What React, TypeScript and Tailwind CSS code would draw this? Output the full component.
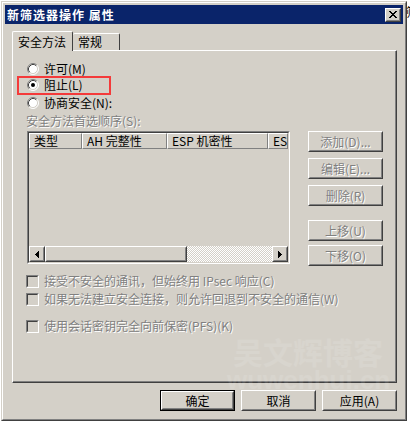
import React from "react";

const DIS = "text-[#808080] [text-shadow:1px_1px_0_#ffffff]";

function Raised({ className = "", children, innerClass = "" }: { className?: string; children?: React.ReactNode; innerClass?: string }) {
  return (
    <div className={"border border-t-white border-l-white border-r-[#404040] border-b-[#404040] bg-[#d4d0c8] " + className}>
      <div className={"h-full w-full border border-t-transparent border-l-transparent border-r-[#808080] border-b-[#808080] flex items-center " + innerClass}>
        {children}
      </div>
    </div>
  );
}

function Btn({ children, disabled, className = "" }: { children: React.ReactNode; disabled?: boolean; className?: string }) {
  return (
    <Raised className={"h-[21px] w-[75px] " + className} innerClass="justify-center">
      <span className={"text-[12px] leading-[14px] " + (disabled ? DIS : "text-black")}>{children}</span>
    </Raised>
  );
}

function Radio({ checked }: { checked?: boolean }) {
  return (
    <svg width="12" height="12" viewBox="0 0 12 12" className="shrink-0">
      <circle cx="6" cy="6" r="5" fill="#ffffff" />
      <path d="M2.11 9.89 A5.5 5.5 0 0 1 9.89 2.11" stroke="#808080" strokeWidth="1" fill="none" />
      <path d="M9.89 2.11 A5.5 5.5 0 0 1 2.11 9.89" stroke="#ffffff" strokeWidth="1" fill="none" />
      <path d="M2.82 9.18 A4.5 4.5 0 0 1 9.18 2.82" stroke="#404040" strokeWidth="1" fill="none" />
      <path d="M9.18 2.82 A4.5 4.5 0 0 1 2.82 9.18" stroke="#d4d0c8" strokeWidth="1" fill="none" />
      {checked && <circle cx="6" cy="6" r="2" fill="#000000" />}
    </svg>
  );
}

function Check() {
  return (
    <div className="w-[13px] h-[13px] shrink-0 border border-t-[#808080] border-l-[#808080] border-r-white border-b-white">
      <div className="w-full h-full border border-t-[#404040] border-l-[#404040] border-r-[#d4d0c8] border-b-[#d4d0c8] bg-[#d4d0c8]" />
    </div>
  );
}

function HeaderCell({ children, className = "" }: { children: React.ReactNode; className?: string }) {
  return (
    <div className={"h-full shrink-0 border border-t-white border-l-white border-r-[#808080] border-b-[#808080] flex items-center pl-[4px] whitespace-nowrap overflow-hidden " + className}>
      <span className="text-[12px] leading-[14px] text-black">{children}</span>
    </div>
  );
}

function ArrowBtn({ dir }: { dir: "l" | "r" }) {
  return (
    <Raised className="w-[16px] h-[16px] shrink-0" innerClass="justify-center">
      <svg width="4" height="7" viewBox="0 0 4 7" shapeRendering="crispEdges">
        {dir === "l" ? (
          <path d="M3 0h1v7h-1z M2 1h1v5h-1z M1 2h1v3h-1z M0 3h1v1h-1z" fill="#000" />
        ) : (
          <path d="M0 0h1v7h-1z M1 1h1v5h-1z M2 2h1v3h-1z M3 3h1v1h-1z" fill="#000" />
        )}
      </svg>
    </Raised>
  );
}

export default function App() {
  return (
    <div className="relative w-[410px] h-[425px] bg-white overflow-hidden font-['Noto_Sans_CJK_SC',sans-serif] text-[12px] text-black">
      <div className="ml-[1px] mt-[1px] w-[406px] h-[420px] border border-t-[#d4d0c8] border-l-[#d4d0c8] border-r-[#404040] border-b-[#404040] bg-[#d4d0c8]">
        <div className="h-full border border-t-white border-l-white border-r-[#808080] border-b-[#808080] p-[2px] flex flex-col">
          {/* title bar */}
          <div className="h-[19px] shrink-0 bg-[#0a246a] flex items-center justify-between pl-[2px] pr-[2px]">
            <span className="text-white font-bold text-[12px] tracking-[1px] leading-[14px]">新筛选器操作 属性</span>
            <Raised className="w-[16px] h-[14px]" innerClass="justify-center">
              <svg width="8" height="7" viewBox="0 0 8 7" shapeRendering="crispEdges">
                <path
                  d="M0 0h2v1h-2z M6 0h2v1h-2z M1 1h2v1h-2z M5 1h2v1h-2z M2 2h4v1h-4z M3 3h2v1h-2z M2 4h4v1h-4z M1 5h2v1h-2z M5 5h2v1h-2z M0 6h2v1h-2z M6 6h2v1h-2z"
                  fill="#000"
                />
              </svg>
            </Raised>
          </div>

          <div className="pl-[7px] pt-[7px]">
            {/* tabs */}
            <div className="flex items-end h-[19px]">
              <div className="relative z-10 -mb-[1px] w-[61px] h-[20px] bg-[#d4d0c8] border-t border-l border-r border-t-white border-l-white border-r-[#404040] rounded-t-[2px] flex items-center pl-[5px]">
                <span className="text-[12px] leading-[14px]">安全方法</span>
              </div>
              <div className="w-[47px] h-[17px] bg-[#d4d0c8] border-t border-r border-t-white border-r-[#404040] rounded-t-[2px] flex items-center pl-[5px]">
                <span className="text-[12px] leading-[14px]">常规</span>
              </div>
            </div>

            {/* panel */}
            <div className="w-[385px] h-[333px] border border-t-white border-l-white border-r-[#404040] border-b-[#404040]">
              <div className="h-full border-r border-b border-r-[#808080] border-b-[#808080] pl-[13px] flex flex-col">
                <div className="mt-[10px] h-[16px] flex items-center gap-[5px] pl-[1px]">
                  <Radio />
                  <span className="leading-[14px]">许可(M)</span>
                </div>
                <div className="h-[16px] flex items-center gap-[5px] pl-[1px]">
                  <Radio checked />
                  <span className="leading-[14px]">阻止(L)</span>
                </div>
                <div className="mt-[2px] h-[16px] flex items-center gap-[5px] pl-[1px]">
                  <Radio />
                  <span className="leading-[14px]">协商安全(N):</span>
                </div>
                <div className="mt-[2px] h-[16px] flex items-center">
                  <span className={"leading-[14px] " + DIS}>安全方法首选顺序(S):</span>
                </div>

                <div className="mt-[2px] flex h-[135px]">
                  {/* list */}
                  <div className="ml-[1px] w-[263px] h-[133px] shrink-0 border border-t-[#808080] border-l-[#808080] border-r-white border-b-white">
                    <div className="h-full border border-t-[#404040] border-l-[#404040] border-r-[#d4d0c8] border-b-[#d4d0c8] flex flex-col overflow-hidden">
                      <div className="h-[16px] shrink-0 flex overflow-hidden">
                        <HeaderCell className="w-[53px]">类型</HeaderCell>
                        <HeaderCell className="w-[85px]">AH 完整性</HeaderCell>
                        <HeaderCell className="w-[101px]">ESP 机密性</HeaderCell>
                        <HeaderCell className="w-[20px]">ESP</HeaderCell>
                      </div>
                      <div className="flex-1" />
                      <div className="h-[16px] shrink-0 flex">
                        <ArrowBtn dir="l" />
                        <Raised className="w-[142px] h-[16px] shrink-0" />
                        <div className="flex-1 bg-[repeating-conic-gradient(#ffffff_0_25%,#d4d0c8_0_50%)] bg-[length:2px_2px]" />
                        <ArrowBtn dir="r" />
                      </div>
                    </div>
                  </div>
                  {/* buttons */}
                  <div className="ml-[18px] flex flex-col">
                    <Btn disabled>添加(D)...</Btn>
                    <Btn disabled className="mt-[6px]">编辑(E)...</Btn>
                    <Btn disabled className="mt-[6px]">删除(R)</Btn>
                    <Btn disabled className="mt-[14px]">上移(U)</Btn>
                    <Btn disabled className="mt-[4px]">下移(O)</Btn>
                  </div>
                </div>

                <div className="mt-[7px] h-[16px] flex items-center gap-[5px]">
                  <Check />
                  <span className={"leading-[14px] whitespace-nowrap " + DIS}>接受不安全的通讯，但始终用 IPsec 响应(C)</span>
                </div>
                <div className="mt-[2px] h-[16px] flex items-center gap-[5px]">
                  <Check />
                  <span className={"leading-[14px] whitespace-nowrap " + DIS}>如果无法建立安全连接，则允许回退到不安全的通信(W)</span>
                </div>
                <div className="mt-[11px] h-[16px] flex items-center gap-[5px]">
                  <Check />
                  <span className={"leading-[14px] whitespace-nowrap " + DIS}>使用会话密钥完全向前保密(PFS)(K)</span>
                </div>
              </div>
            </div>

            {/* bottom buttons */}
            <div className="mt-[7px] w-[385px] flex justify-end gap-[6px]">
              <div className="w-[75px] h-[21px] border border-black">
                <Raised className="w-full h-full" innerClass="justify-center">
                  <span className="text-[12px] leading-[14px]">确定</span>
                </Raised>
              </div>
              <Btn>取消</Btn>
              <Btn>应用(A)</Btn>
            </div>
          </div>
        </div>
      </div>

      {/* watermark */}
      <div className="pointer-events-none absolute left-[233px] top-[334px] text-[30px] leading-[34px] font-bold text-white/10 whitespace-nowrap">吴文辉博客</div>
      <div className="pointer-events-none absolute left-[227px] top-[366px] text-[26px] leading-[28px] font-bold font-['Liberation_Sans',sans-serif] text-white/10 whitespace-nowrap">wuwenhui.cn</div>

      {/* background window char */}
      <div className="absolute left-[406px] top-[5px] text-[12px] leading-[14px] text-black">筛</div>

      {/* red annotation */}
      <div className="absolute left-[17px] top-[76px] w-[94px] h-[19px] border-2 border-[#f43a3a]" />
    </div>
  );
}
